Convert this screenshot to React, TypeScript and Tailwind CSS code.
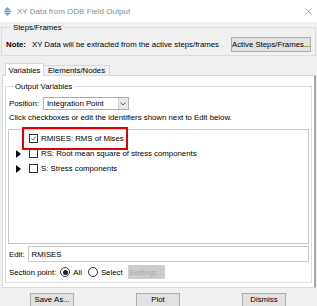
import React from 'react';

function Checkbox({ checked = false }: { checked?: boolean }) {
  return (
    <span className="flex h-[9px] w-[9px] shrink-0 items-center justify-center border border-[#333] bg-white">
      {checked && (
        <svg viewBox="0 0 9 9" className="h-[9px] w-[9px]">
          <path d="M1.6 4.6 L3.6 6.6 L7.4 2.2" fill="none" stroke="#333" strokeWidth="1" />
        </svg>
      )}
    </span>
  );
}

function Radio({ checked = false }: { checked?: boolean }) {
  return (
    <span className="flex h-[10px] w-[10px] shrink-0 items-center justify-center rounded-full border border-[#333] bg-white">
      {checked && <span className="h-[5px] w-[5px] rounded-full bg-[#222]" />}
    </span>
  );
}

function Expander({ show }: { show: boolean }) {
  return (
    <span className="flex w-[12px] shrink-0 items-center justify-start">
      {show && (
        <svg viewBox="0 0 5 8" className="h-[8px] w-[5px]">
          <path d="M0 0 L5 4 L0 8 Z" fill="#000" />
        </svg>
      )}
    </span>
  );
}

const rows = [
  { id: 'RMISES', label: 'RMISES: RMS of Mises', checked: true, expand: false, marked: true },
  { id: 'RS', label: 'RS: Root mean square of stress components', checked: false, expand: true, marked: false },
  { id: 'S', label: 'S: Stress components', checked: false, expand: true, marked: false },
];

const btn = 'h-[14px] w-[44px] whitespace-nowrap border border-[#adadad] bg-[#e1e1e1] leading-[12px]';

export default function App() {
  return (
    <div className="h-[306px] w-[317px] overflow-hidden bg-[#f0f0f0] text-[7.8px] leading-[11px] text-black [font-family:'Liberation_Sans',Arial,sans-serif]">
      {/* Title bar */}
      <div className="flex h-[22px] items-center bg-white pl-[4px] pr-[5px]">
        <svg viewBox="0 0 7 9" className="h-[9px] w-[7px]">
          <path d="M3.5 0 L7 3.4 L0 3.4 Z" fill="#6a9fd4" />
          <rect x="0" y="4" width="7" height="1" fill="#6a9fd4" />
          <path d="M0 5.6 L7 5.6 L3.5 9 Z" fill="#6a9fd4" />
        </svg>
        <span className="ml-[6px] text-[8px] text-[#8c8c8c]">XY Data from ODB Field Output</span>
        <svg viewBox="0 0 8 8" className="ml-auto h-[7px] w-[7px]">
          <path d="M0.5 0.5 L7.5 7.5 M7.5 0.5 L0.5 7.5" stroke="#9a9a9a" strokeWidth="0.9" />
        </svg>
      </div>

      {/* Steps/Frames */}
      <fieldset className="ml-[1px] w-[315px] border border-[#dcdcdc] px-[4px] pb-[3px]">
        <legend className="ml-[4px] px-[3px] leading-[11px]">Steps/Frames</legend>
        <div className="flex items-center pt-[4px]">
          <span className="font-bold">Note:</span>
          <span className="ml-[6px] whitespace-nowrap">XY Data will be extracted from the active steps/frames</span>
          <button className="ml-auto h-[15px] w-[80px] whitespace-nowrap border border-[#adadad] bg-[#e1e1e1] leading-[13px]">
            Active Steps/Frames...
          </button>
        </div>
      </fieldset>

      {/* Tabs */}
      <div className="mt-[7px] flex items-end pl-[5px]">
        <div className="relative z-10 -mb-[1px] flex h-[13px] w-[39px] items-center justify-center border border-b-0 border-[#d9d9d9] bg-white">
          Variables
        </div>
        <div className="flex h-[10px] w-[66px] items-center justify-center border border-l-0 border-b-0 border-[#d9d9d9] bg-[#f0f0f0]">
          Elements/Nodes
        </div>
      </div>

      {/* Tab panel */}
      <div className="ml-[2px] h-[213px] w-[314px] border border-[#d9d9d9] border-r-2 border-r-[#a9a9a9] bg-white pl-[2px] pt-[5px]">
        <fieldset className="w-[307px] border border-[#dcdcdc] px-[2px] pb-[3px]">
          <legend className="ml-[6px] px-[1px] leading-[11px]">Output Variables</legend>

          <div className="mt-[5px] flex items-center pl-[1px]">
            <span>Position:</span>
            <div className="ml-[4px] flex h-[13px] w-[86px] items-center border border-[#acacac] bg-white">
              <span className="flex-1 pl-[3px]">Integration Point</span>
              <span className="flex h-full w-[10px] items-center justify-center border-l border-[#cfcfcf] bg-[#e8e8e8]">
                <svg viewBox="0 0 6 4" className="h-[4px] w-[6px]">
                  <path d="M0.5 0.5 L3 3 L5.5 0.5" fill="none" stroke="#555" strokeWidth="0.9" />
                </svg>
              </span>
            </div>
          </div>

          <div className="mt-[2px] whitespace-nowrap pl-[1px]">Click checkboxes or edit the identifiers shown next to Edit below.</div>

          {/* Variable list */}
          <div className="mt-[6px] h-[115px] w-[301px] border border-[#c8c8c8] bg-white pt-[1px]">
            {rows.map((r) => (
              <div key={r.id} className="relative flex h-[15px] items-center pl-[7px]">
                <Expander show={r.expand} />
                <span className="ml-[1px]">
                  <Checkbox checked={r.checked} />
                </span>
                <span className="ml-[3px] whitespace-nowrap">{r.label}</span>
                {r.marked && (
                  <span className="pointer-events-none absolute left-[13px] top-[-4px] h-[23px] w-[106px] border-2 border-[#e00000]" />
                )}
              </div>
            ))}
          </div>

          <div className="mt-[2px] flex items-center pl-[1px]">
            <span>Edit:</span>
            <div className="ml-[3px] flex h-[16px] w-[281px] items-center border border-[#c8c8c8] bg-white pl-[3px]">
              RMISES
            </div>
          </div>

          <div className="mt-[3px] flex items-center pl-[1px]">
            <span className="whitespace-nowrap">Section point:</span>
            <span className="ml-[4px]">
              <Radio checked />
            </span>
            <span className="ml-[3px]">All</span>
            <span className="ml-[6px]">
              <Radio />
            </span>
            <span className="ml-[3px]">Select</span>
            <button className="ml-[5px] h-[14px] w-[37px] overflow-hidden whitespace-nowrap border border-[#cfcfcf] bg-[#cccccc] text-[#a9a9a9]">
              Settings...
            </button>
          </div>
        </fieldset>
      </div>

      {/* Dialog buttons */}
      <div className="mt-[5px] flex">
        <button className={`ml-[30px] ${btn}`}>Save As...</button>
        <button className={`ml-[62px] ${btn}`}>Plot</button>
        <button className={`ml-[62px] ${btn}`}>Dismiss</button>
      </div>
    </div>
  );
}
